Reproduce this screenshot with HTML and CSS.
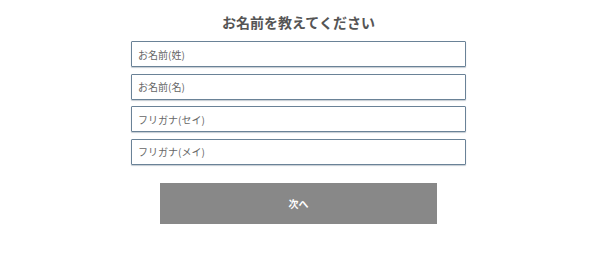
FILE: index.html
```html
<!DOCTYPE html>
<html lang="ja">
<head>
    <meta charset="UTF-8">
    <meta name="viewport" content="width=device-width, initial-scale=1.0">
    <title>お名前</title>
    <link rel="stylesheet" href="styles.css">
</head>
<body>
    <div class="page">
        <form class="name-form" onsubmit="return false">
            <h2 class="form-title">お名前を教えてください</h2>
            <div class="fields">
                <input class="field" type="text" placeholder="お名前(姓)">
                <input class="field" type="text" placeholder="お名前(名)">
                <input class="field" type="text" placeholder="フリガナ(セイ)">
                <input class="field" type="text" placeholder="フリガナ(メイ)">
            </div>
            <button class="next-btn" type="submit">次へ</button>
        </form>
    </div>
</body>
</html>
```

FILE: styles.css
```css
body {
    margin: 0;
    background: #fff;
    font-family: "Noto Sans CJK JP", "Noto Sans", sans-serif;
}

.page {
    padding: 12px 3px 0 0;
}

.name-form {
    width: 335px;
    margin: 0 auto;
    display: flex;
    flex-direction: column;
    align-items: center;
}

.form-title {
    margin: 0 0 9px 0;
    font-size: 14px;
    line-height: 20px;
    font-weight: bold;
    color: #555;
}

.fields {
    width: 100%;
    display: flex;
    flex-direction: column;
    gap: 6.5px;
}

.field {
    box-sizing: border-box;
    width: 100%;
    height: 26px;
    margin: 0;
    padding: 0 6px;
    border: 1px solid #6a8297;
    border-radius: 1px;
    box-shadow: 0 1px 1px rgba(90, 110, 130, 0.35);
    font-family: inherit;
    font-size: 10px;
    color: #333;
    outline: none;
}

.field::placeholder {
    color: #666;
}

.next-btn {
    margin-top: 18px;
    width: 277px;
    height: 41px;
    border: none;
    background: #888;
    color: #fff;
    font-family: inherit;
    font-size: 10px;
    font-weight: bold;
    cursor: pointer;
}
```
